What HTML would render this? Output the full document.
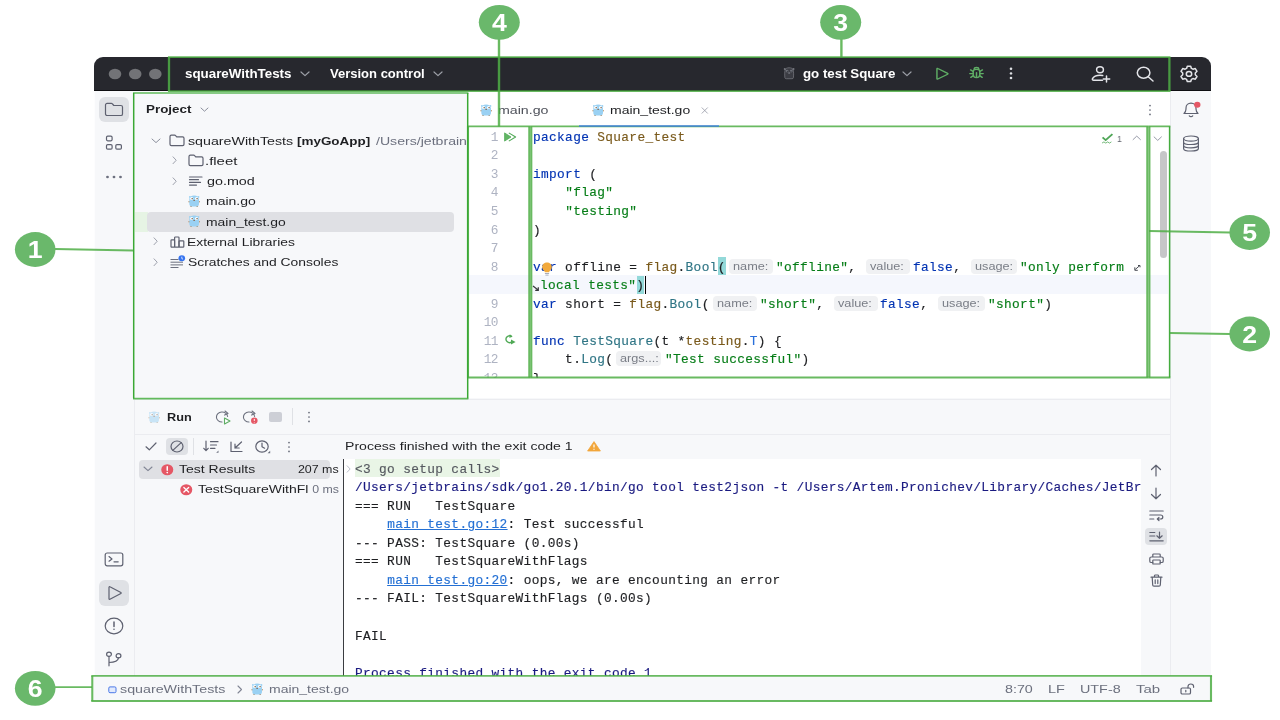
<!DOCTYPE html>
<html lang="en">
<head>
<meta charset="utf-8">
<title>GoLand user interface overview</title>
<style>
*{box-sizing:border-box;margin:0;padding:0}
html,body{width:1280px;height:720px;overflow:hidden;background:#fff}
body{position:relative;font-family:"Liberation Sans",sans-serif;color:#1e1f22}
.a{position:absolute}
/* stretched proportional UI text */
.t{will-change:transform;position:absolute;white-space:nowrap;transform-origin:0 0;transform:scaleX(var(--sx,1.19));font:11.5px/14px "Liberation Sans",sans-serif;color:#1e1f22}
.t.r{transform-origin:100% 0}
.b{font-weight:bold;font-size:11.2px}.b.w{font-size:12.5px}
.g{color:#6c707e}
.w{color:#fff}
/* monospace text */
.m{will-change:transform;position:absolute;white-space:pre;font:12.8px/18.53px "Liberation Mono",monospace;letter-spacing:.35px;color:#1e1f22;left:533px;-webkit-text-stroke:.15px}
.ln{will-change:transform;position:absolute;white-space:pre;font:12.8px/18.53px "Liberation Mono",monospace;letter-spacing:-.5px;color:#aeb3c2;width:30px;left:468px;text-align:right}
.k{color:#0033b3}.s{color:#067d17}.p{color:#7a5a1c}.f{color:#2f7585}.ty{color:#2a6fdb}.nv{color:#1a1a80}.cg{color:#55585f}.lk{color:#2470d4;text-decoration:underline}
.h{position:absolute;height:15px;width:44px;border-radius:4px;background:#f0f1f3}
.h span{will-change:transform;position:absolute;left:4.200px;top:1.100px;white-space:nowrap;font:11px/13px "Liberation Sans",sans-serif;color:#797d86;transform-origin:0 0;transform:scaleX(var(--sx,1.17))}
svg{position:absolute;overflow:visible}
.i{fill:none;stroke:#5e6170;stroke-width:1.2;stroke-linecap:round;stroke-linejoin:round}
.iw{fill:none;stroke:#e4e5e9;stroke-width:1.5;stroke-linecap:round;stroke-linejoin:round}
</style>
</head>
<body>

<!-- ===== window chrome / panels ===== -->
<div id="win" class="a" style="left:94px;top:57px;width:1117px;height:644px;background:#f7f8fa;border-radius:9px 9px 0 0;overflow:hidden">
  <div id="titlebar" class="a" style="left:0;top:0;width:1117px;height:34px;background:#27282e;border-bottom:1px solid #0e0e11"></div>
</div>

<div class="a" style="left:94px;top:91px;width:1px;height:585px;background:#fdfdfe"></div>
<!-- left stripe border -->
<div class="a" style="left:134px;top:398px;width:1px;height:278px;background:#ebecf0"></div>
<!-- editor area (white) -->
<div id="editor" class="a" style="left:468px;top:91px;width:702px;height:307px;background:#fff"></div>
<!-- caret row -->
<div class="a" style="left:468px;top:275px;width:700px;height:19px;background:#f5f7fd"></div>
<!-- run panel separators -->
<div class="a" style="left:134px;top:399px;width:1037px;height:1px;background:#ebecf0"></div>
<div class="a" style="left:134px;top:434px;width:1037px;height:1px;background:#ebecf0"></div>
<div class="a" style="left:1170px;top:91px;width:1px;height:585px;background:#ebecf0"></div>
<!-- console white -->
<div id="console" class="a" style="left:344px;top:459px;width:797px;height:217px;background:#fff"></div>
<div class="a" style="left:343px;top:459px;width:1.3px;height:217px;background:#3a3c40"></div>

<!-- ===== title bar ===== -->
<svg width="60" height="20" viewBox="0 0 60 20" style="left:104px;top:64px">
  <ellipse cx="11" cy="10" rx="6.300" ry="5.300" fill="#727377"/>
  <ellipse cx="31.200" cy="10" rx="6.300" ry="5.300" fill="#727377"/>
  <ellipse cx="51.300" cy="10" rx="6.300" ry="5.300" fill="#727377"/>
</svg>
<div class="t b w" style="left:184.50px;top:66.67px;--sx:1.068">squareWithTests</div>
<svg width="10" height="6" viewBox="0 0 10 6" style="left:300px;top:71px"><path d="M1 1l4 3.6L9 1" fill="none" stroke="#9da0a8" stroke-width="1.2" stroke-linecap="round" stroke-linejoin="round"/></svg>
<div class="t b w" style="left:329.90px;top:66.67px;--sx:1.041">Version control</div>
<svg width="10" height="6" viewBox="0 0 10 6" style="left:433px;top:71px"><path d="M1 1l4 3.6L9 1" fill="none" stroke="#9da0a8" stroke-width="1.2" stroke-linecap="round" stroke-linejoin="round"/></svg>
<!-- run config gopher (muted) -->
<svg width="12.300" height="12.300" viewBox="0 0 13 13" style="left:782.9px;top:67.2px">
  <path d="M2.2 3.2C2.6 1.6 4.3.8 6.5.8s3.9.8 4.3 2.4c.5 2 .5 6 .2 8.2-.2.8-.8 1-1.500 1h-6c-.7 0-1.300-.2-1.500-1-.3-2.200-.3-6.200.2-8.200z" fill="#3b3c43" stroke="#777980" stroke-width=".8"/>
  <circle cx="1.900" cy="2.200" r="1.100" fill="#777980"/><circle cx="11.100" cy="2.200" r="1.100" fill="#777980"/>
  <circle cx="4.300" cy="4.300" r="1.500" fill="#6f727a"/><circle cx="8.700" cy="4.300" r="1.500" fill="#6f727a"/>
  <circle cx="4.600" cy="4.500" r=".6" fill="#27282e"/><circle cx="8.400" cy="4.500" r=".6" fill="#27282e"/>
  <ellipse cx="6.500" cy="6.300" rx="1.200" ry=".8" fill="#7b7e86"/>
</svg>
<div class="t b w" style="left:803.14px;top:66.67px;--sx:1.064">go test Square</div>
<svg width="10" height="6" viewBox="0 0 10 6" style="left:902px;top:71px"><path d="M1 1l4 3.600L9 1" fill="none" stroke="#9da0a8" stroke-width="1.200" stroke-linecap="round" stroke-linejoin="round"/></svg>
<!-- run -->
<svg width="14.500" height="13.500" viewBox="0 0 15 16" preserveAspectRatio="none" style="left:935.300px;top:66.500px"><path d="M2 2.200v11.600c0 .5.500.8.900.5l10.200-5.700c.4-.2.400-.9 0-1.100L2.900 1.700c-.4-.3-.9 0-.9.500z" fill="none" stroke="#5fad65" stroke-width="1.500" stroke-linejoin="round"/></svg>
<!-- debug -->
<svg width="17" height="14" viewBox="0 0 17 16" preserveAspectRatio="none" style="left:968.200px;top:66.300px" fill="none" stroke="#5fad65" stroke-width="1.500" stroke-linecap="round">
  <path d="M5.200 6.200c0-1.400 1.300-2.400 3.300-2.400s3.300 1 3.300 2.400v3.500c0 2-1.400 3.500-3.300 3.500s-3.300-1.500-3.300-3.500z"/>
  <path d="M6.200 3.800C6.200 2.600 7.200 1.700 8.500 1.700s2.300.9 2.300 2.100"/>
  <path d="M5.200 6.200L2.600 4.400M11.800 6.200l2.600-1.800M5.200 8.700H1.800M11.800 8.700h3.400M5.400 11l-2.600 2M11.600 11l2.600 2M8.500 7.500v5.500"/>
</svg>
<!-- kebab -->
<svg width="4" height="16" viewBox="0 0 4 16" style="left:1009px;top:66px" fill="#dfe1e5"><ellipse cx="2" cy="2.800" rx="1.300" ry="1.200"/><ellipse cx="2" cy="7.400" rx="1.300" ry="1.200"/><ellipse cx="2" cy="12" rx="1.300" ry="1.200"/></svg>
<!-- add user -->
<svg width="22" height="18" viewBox="0 0 22 18" style="left:1090px;top:65px" class="iw">
  <ellipse cx="10" cy="4.800" rx="3.400" ry="3"/>
  <path d="M12.500 15.300H3.600c-.9 0-1.500-.8-1.100-1.600 1.100-2.200 3.800-3.400 7.500-3.400 1 0 1.900.1 2.700.3"/>
  <path d="M16.500 11v6M13.300 14h6.400" stroke-width="1.500"/>
</svg>
<!-- search -->
<svg width="20" height="18" viewBox="0 0 20 18" style="left:1135px;top:65px" class="iw">
  <ellipse cx="8.600" cy="7.800" rx="6.300" ry="5.500"/><path d="M13.200 11.800l4.800 4.200" stroke-width="1.500"/>
</svg>
<!-- settings -->
<svg width="20" height="18" viewBox="0 0 20 18" style="left:1179px;top:65px" class="iw">
  <path d="M8.300 1.200h3.400l.7 2.200 1.500.8 2.400-.6 1.700 2.700-1.700 1.700v1.800l1.700 1.700-1.700 2.700-2.400-.6-1.500.8-.7 2.200H8.300l-.7-2.200-1.500-.8-2.400.6L2 11.500l1.700-1.700V8L2 6.300l1.700-2.700 2.400.6 1.500-.8z" stroke-width="1.500"/>
  <ellipse cx="10" cy="8.900" rx="2.700" ry="2.400" stroke-width="1.500"/>
</svg>

<!-- ===== left stripe ===== -->
<div class="a" style="left:99px;top:97px;width:30px;height:25px;border-radius:6px;background:#dfe1e5"></div>
<svg width="20" height="15" viewBox="0 0 20 15" style="left:104px;top:102px" class="i" stroke-width="1.200">
  <path d="M1.500 3c0-.9.700-1.600 1.600-1.600h4.200c.5 0 .9.200 1.200.6l1.300 1.500h7.100c.9 0 1.600.7 1.600 1.600v6.800c0 .9-.7 1.600-1.600 1.600H3.100c-.9 0-1.600-.7-1.600-1.600z"/>
</svg>
<svg width="18" height="16" viewBox="0 0 18 16" style="left:105px;top:135px" class="i" stroke-width="1.200">
  <rect x="1.500" y="1.200" width="5.600" height="4.600" rx="1.200"/><rect x="1.500" y="9.600" width="5.600" height="4.600" rx="1.200"/><rect x="10.800" y="9.600" width="5.600" height="4.600" rx="1.200"/>
</svg>
<svg width="18" height="4" viewBox="0 0 18 4" style="left:105px;top:175px" fill="#6c707e"><ellipse cx="2.500" cy="2" rx="1.400" ry="1.200"/><ellipse cx="9" cy="2" rx="1.400" ry="1.200"/><ellipse cx="15.500" cy="2" rx="1.400" ry="1.200"/></svg>
<!-- terminal -->
<svg width="20" height="15" viewBox="0 0 20 15" style="left:104px;top:551.5px" class="i" stroke-width="1.200">
  <rect x="1.200" y="1" width="17.600" height="12.800" rx="2"/><path d="M5 4.600l3 2.300-3 2.300M10 9.800h4.200"/>
</svg>
<!-- run (selected) -->
<div class="a" style="left:99px;top:580px;width:30px;height:25.500px;border-radius:6px;background:#dfe1e5"></div>
<svg width="16" height="16" viewBox="0 0 16 16" style="left:107px;top:585px" class="i" stroke-width="1.200">
  <path d="M2 2.300v11.400c0 .5.500.8.900.5l11-5.700c.4-.2.400-.8 0-1L2.900 1.800c-.4-.3-.9 0-.9.500z"/>
</svg>
<!-- problems -->
<svg width="20" height="18" viewBox="0 0 20 18" style="left:104px;top:617px" class="i" stroke-width="1.200">
  <ellipse cx="10" cy="9" rx="8.800" ry="7.800"/><path d="M10 5v4.600" stroke-width="1.500"/><ellipse cx="10" cy="12.300" rx=".9" ry=".8" fill="#6c707e" stroke="none"/>
</svg>
<!-- git -->
<svg width="18" height="16" viewBox="0 0 18 16" style="left:105px;top:651px" class="i" stroke-width="1.200">
  <ellipse cx="4" cy="3.200" rx="2.400" ry="2.100"/><ellipse cx="13.500" cy="4.800" rx="2.400" ry="2.100"/><path d="M4 5.300v9.500M4 11.500c5 0 9-.8 9.500-4.600"/>
</svg>

<!-- ===== project tool window ===== -->
<div class="t b" style="left:146.42px;top:102.2px;--sx:1.197">Project</div>
<svg width="9" height="6" viewBox="0 0 9 6" style="left:199.500px;top:107px"><path d="M1 1l3.500 3.200L8 1" fill="none" stroke="#8c909d" stroke-width="1" stroke-linecap="round" stroke-linejoin="round"/></svg>
<!-- row 1 -->
<svg width="10" height="6" viewBox="0 0 10 6" style="left:150.500px;top:138px"><path d="M1 1l4 3.600L9 1" fill="none" stroke="#8c909d" stroke-width="1" stroke-linecap="round" stroke-linejoin="round"/></svg>
<svg width="16" height="13" viewBox="0 0 16 13" style="left:169px;top:134px" class="i" stroke="#858998" stroke-width="1.050"><path d="M1 2.500c0-.8.600-1.400 1.400-1.400h3.200c.4 0 .8.200 1 .5l1.100 1.300h5.900c.8 0 1.400.6 1.400 1.400v6c0 .8-.6 1.400-1.400 1.400H2.400c-.8 0-1.400-.6-1.400-1.400z"/></svg>
<div class="t" style="left:187.80px;top:133.77px;--sx:1.237">squareWithTests</div>
<div class="t b" style="left:296.63px;top:133.86px;--sx:1.202">[myGoApp]</div>
<div class="t g" style="left:375.87px;top:133.77px;--sx:1.227">/Users/jetbrain</div>
<!-- row 2 -->
<svg width="5.500" height="8.500" viewBox="0 0 6 10" style="left:171.500px;top:156.30px"><path d="M1 1l3.700 4L1 9" fill="none" stroke="#8c909d" stroke-width="1" stroke-linecap="round" stroke-linejoin="round"/></svg>
<svg width="16" height="13" viewBox="0 0 16 13" style="left:188px;top:154px" class="i" stroke="#858998" stroke-width="1.050"><path d="M1 2.500c0-.8.600-1.400 1.400-1.400h3.200c.4 0 .8.200 1 .5l1.100 1.300h5.900c.8 0 1.400.6 1.400 1.400v6c0 .8-.6 1.400-1.400 1.400H2.400c-.8 0-1.400-.6-1.400-1.400z"/></svg>
<div class="t" style="left:205.38px;top:153.97px;--sx:1.296">.fleet</div>
<!-- row 3 -->
<svg width="5.500" height="8.500" viewBox="0 0 6 10" style="left:171.500px;top:176.80px"><path d="M1 1l3.700 4L1 9" fill="none" stroke="#8c909d" stroke-width="1" stroke-linecap="round" stroke-linejoin="round"/></svg>
<svg width="14" height="10" viewBox="0 0 14 10" style="left:189px;top:176px" class="i" stroke="#858998" stroke-width=".9"><path d="M.5 1h12.500M.5 3.700h9M.5 6.400h11M.5 9.100h7"/></svg>
<div class="t" style="left:206.63px;top:174.17px;--sx:1.245">go.mod</div>
<!-- row 4 -->
<svg width="12.300" height="12.300" viewBox="0 0 13 13" style="left:187.9px;top:194.7px">
  <ellipse cx="1.300" cy="7.200" rx=".9" ry=".8" fill="#b08457"/><ellipse cx="11.700" cy="7.200" rx=".9" ry=".8" fill="#b08457"/>
  <ellipse cx="3.300" cy="12" rx="1" ry=".7" fill="#b08457"/><ellipse cx="9.700" cy="12" rx="1" ry=".7" fill="#b08457"/>
  <ellipse cx="2" cy="2" rx="1" ry="1" fill="#9ad1f3"/><ellipse cx="11" cy="2" rx="1" ry="1" fill="#9ad1f3"/>
  <path d="M1.400 4.300C1.400 2 3.600.6 6.500.6s5.100 1.400 5.100 3.700v5.200c0 1.700-1.300 2.700-3 2.700H4.400c-1.700 0-3-1-3-2.700z" fill="#9ad1f3"/>
  <ellipse cx="3.900" cy="3.800" rx="1.700" ry="1.600" fill="#fff"/><ellipse cx="9.100" cy="3.800" rx="1.700" ry="1.600" fill="#fff"/>
  <ellipse cx="4.400" cy="3.900" rx=".7" ry=".7" fill="#5a3d22"/><ellipse cx="9.600" cy="3.900" rx=".7" ry=".7" fill="#5a3d22"/>
  <ellipse cx="6.500" cy="5.700" rx=".9" ry=".6" fill="#8a6f5a"/>
</svg>
<div class="t" style="left:205.98px;top:194.37px;--sx:1.217">main.go</div>
<!-- row 5 selected -->
<div class="a" style="left:135px;top:212px;width:13px;height:19.500px;background:#e6f4e4"></div>
<div class="a" style="left:147px;top:212px;width:307px;height:19.500px;border-radius:4px;background:#dfe0e4"></div>
<svg width="12.300" height="12.300" viewBox="0 0 13 13" style="left:187.9px;top:215.2px">
  <ellipse cx="1.300" cy="7.200" rx=".9" ry=".8" fill="#b08457"/><ellipse cx="11.700" cy="7.200" rx=".9" ry=".8" fill="#b08457"/>
  <ellipse cx="3.300" cy="12" rx="1" ry=".7" fill="#b08457"/><ellipse cx="9.700" cy="12" rx="1" ry=".7" fill="#b08457"/>
  <ellipse cx="2" cy="2" rx="1" ry="1" fill="#9ad1f3"/><ellipse cx="11" cy="2" rx="1" ry="1" fill="#9ad1f3"/>
  <path d="M1.400 4.300C1.400 2 3.600.6 6.500.6s5.100 1.400 5.100 3.700v5.200c0 1.700-1.300 2.700-3 2.700H4.400c-1.700 0-3-1-3-2.700z" fill="#9ad1f3"/>
  <ellipse cx="3.900" cy="3.800" rx="1.700" ry="1.600" fill="#fff"/><ellipse cx="9.100" cy="3.800" rx="1.700" ry="1.600" fill="#fff"/>
  <ellipse cx="4.400" cy="3.900" rx=".7" ry=".7" fill="#5a3d22"/><ellipse cx="9.600" cy="3.900" rx=".7" ry=".7" fill="#5a3d22"/>
  <ellipse cx="6.500" cy="5.700" rx=".9" ry=".6" fill="#8a6f5a"/>
</svg>
<div class="t" style="left:205.98px;top:214.57px;--sx:1.210">main_test.go</div>
<!-- row 6 -->
<svg width="5.500" height="8.500" viewBox="0 0 6 10" style="left:152.500px;top:237.30px"><path d="M1 1l3.700 4L1 9" fill="none" stroke="#8c909d" stroke-width="1" stroke-linecap="round" stroke-linejoin="round"/></svg>
<svg width="15" height="12" viewBox="0 0 15 12" style="left:169.500px;top:235.500px" class="i" stroke="#7a7e8d" stroke-width="1"><rect x="1" y="3.800" width="3.600" height="7.400" rx=".8"/><rect x="4.600" y="1" width="4.400" height="10.200" rx=".8"/><rect x="9" y="4.800" width="4.800" height="6.400" rx=".8"/></svg>
<div class="t" style="left:186.65px;top:234.77px;--sx:1.206">External Libraries</div>
<!-- row 7 -->
<svg width="5.500" height="8.500" viewBox="0 0 6 10" style="left:152.500px;top:257.80px"><path d="M1 1l3.700 4L1 9" fill="none" stroke="#8c909d" stroke-width="1" stroke-linecap="round" stroke-linejoin="round"/></svg>
<svg width="16" height="13" viewBox="0 0 16 13" style="left:169.500px;top:255px"><path d="M.5 4.500h8M.5 7.200h12.500M.5 9.900h12.500M.5 12.500h8" fill="none" stroke="#6c707e" stroke-width="1"/><ellipse cx="11.800" cy="3.300" rx="3.300" ry="3" fill="#3574f0"/><path d="M11.800 1.700v1.800l1.200.7" fill="none" stroke="#fff" stroke-width=".8"/></svg>
<div class="t" style="left:187.80px;top:254.97px;--sx:1.206">Scratches and Consoles</div>

<!-- ===== editor tabs ===== -->
<svg width="12.300" height="12.300" viewBox="0 0 13 13" style="left:479.9px;top:104.2px">
  <ellipse cx="1.300" cy="7.200" rx=".9" ry=".8" fill="#b08457"/><ellipse cx="11.700" cy="7.200" rx=".9" ry=".8" fill="#b08457"/>
  <ellipse cx="3.300" cy="12" rx="1" ry=".7" fill="#b08457"/><ellipse cx="9.700" cy="12" rx="1" ry=".7" fill="#b08457"/>
  <ellipse cx="2" cy="2" rx="1" ry="1" fill="#9ad1f3"/><ellipse cx="11" cy="2" rx="1" ry="1" fill="#9ad1f3"/>
  <path d="M1.400 4.300C1.400 2 3.600.6 6.500.6s5.100 1.400 5.100 3.700v5.200c0 1.700-1.300 2.700-3 2.700H4.400c-1.700 0-3-1-3-2.700z" fill="#9ad1f3"/>
  <ellipse cx="3.900" cy="3.800" rx="1.700" ry="1.600" fill="#fff"/><ellipse cx="9.100" cy="3.800" rx="1.700" ry="1.600" fill="#fff"/>
  <ellipse cx="4.400" cy="3.900" rx=".7" ry=".7" fill="#5a3d22"/><ellipse cx="9.600" cy="3.900" rx=".7" ry=".7" fill="#5a3d22"/>
  <ellipse cx="6.500" cy="5.700" rx=".9" ry=".6" fill="#8a6f5a"/>
</svg>
<div class="t" style="left:498.27px;top:103.42px;color:#4e515a;--sx:1.234">main.go</div>
<svg width="12.300" height="12.300" viewBox="0 0 13 13" style="left:591.9px;top:104.2px">
  <ellipse cx="1.300" cy="7.200" rx=".9" ry=".8" fill="#b08457"/><ellipse cx="11.700" cy="7.200" rx=".9" ry=".8" fill="#b08457"/>
  <ellipse cx="3.300" cy="12" rx="1" ry=".7" fill="#b08457"/><ellipse cx="9.700" cy="12" rx="1" ry=".7" fill="#b08457"/>
  <ellipse cx="2" cy="2" rx="1" ry="1" fill="#9ad1f3"/><ellipse cx="11" cy="2" rx="1" ry="1" fill="#9ad1f3"/>
  <path d="M1.400 4.300C1.400 2 3.600.6 6.500.6s5.100 1.400 5.100 3.700v5.200c0 1.700-1.300 2.700-3 2.700H4.400c-1.700 0-3-1-3-2.700z" fill="#9ad1f3"/>
  <ellipse cx="3.900" cy="3.800" rx="1.700" ry="1.600" fill="#fff"/><ellipse cx="9.100" cy="3.800" rx="1.700" ry="1.600" fill="#fff"/>
  <ellipse cx="4.400" cy="3.900" rx=".7" ry=".7" fill="#5a3d22"/><ellipse cx="9.600" cy="3.900" rx=".7" ry=".7" fill="#5a3d22"/>
  <ellipse cx="6.500" cy="5.700" rx=".9" ry=".6" fill="#8a6f5a"/>
</svg>
<div class="t" style="left:609.58px;top:103.42px;--sx:1.218">main_test.go</div>
<svg width="7.500" height="7" viewBox="0 0 9 9" style="left:700.800px;top:107px"><path d="M1 1l7 7M8 1L1 8" fill="none" stroke="#9296a3" stroke-width="1" stroke-linecap="round"/></svg>

<svg width="4" height="14" viewBox="0 0 4 14" style="left:1148px;top:102.500px" fill="#6c707e"><ellipse cx="2" cy="2.600" rx=".9" ry=".85"/><ellipse cx="2" cy="7" rx=".9" ry=".85"/><ellipse cx="2" cy="11.400" rx=".9" ry=".85"/></svg>

<!-- ===== editor code ===== -->
<div id="code" class="a" style="left:0;top:0;width:1280px;height:377.500px;overflow:hidden">
<div class="ln" style="top:128.9px">1</div>
<div class="ln" style="top:147.43px">2</div>
<div class="ln" style="top:165.96px">3</div>
<div class="ln" style="top:184.49px">4</div>
<div class="ln" style="top:203.02px">5</div>
<div class="ln" style="top:221.55px">6</div>
<div class="ln" style="top:240.08px">7</div>
<div class="ln" style="top:258.61px">8</div>
<div class="ln" style="top:295.67px">9</div>
<div class="ln" style="top:314.2px">10</div>
<div class="ln" style="top:332.73px">11</div>
<div class="ln" style="top:351.26px">12</div>
<div class="ln" style="top:369.79px">13</div>
<div class="m" style="top:128.9px;left:533px"><span class="k">package</span> <span class="p">Square_test</span></div>
<div class="m" style="top:165.96px;left:533px"><span class="k">import</span> (</div>
<div class="m" style="top:184.49px;left:533px">    <span class="s">"flag"</span></div>
<div class="m" style="top:203.02px;left:533px">    <span class="s">"testing"</span></div>
<div class="m" style="top:221.55px;left:533px">)</div>
<div class="a" style="left:718.4px;top:257.11px;width:7.600px;height:18px;background:#93d9d9"></div>
<div class="m" style="top:258.61px;left:533px"><span class="k">var</span> offline = <span class="p">flag</span>.<span class="f">Bool</span>(</div>
<div class="h" style="left:728.5px;top:258.51px;width:44px"><span style="--sx:1.155">name:</span></div>
<div class="m" style="top:258.61px;left:775.5px"><span class="s">"offline"</span>,</div>
<div class="h" style="left:865.5px;top:258.51px;width:44px"><span style="--sx:1.155">value:</span></div>
<div class="m" style="top:258.61px;left:912.5px"><span class="k">false</span>,</div>
<div class="h" style="left:970.5px;top:258.51px;width:46.5px"><span style="--sx:1.155">usage:</span></div>
<div class="m" style="top:258.61px;left:1020px"><span class="s">"only perform </span></div>
<div class="a" style="left:636.7px;top:275.64px;width:7.600px;height:18px;background:#93d9d9"></div>
<div class="m" style="top:277.14px;left:539.8px"><span class="s">local tests"</span>)</div>
<div class="a" style="left:644.500px;top:276.14px;width:1.700px;height:17.500px;background:#000"></div>
<div class="m" style="top:295.67px;left:533px"><span class="k">var</span> short = <span class="p">flag</span>.<span class="f">Bool</span>(</div>
<div class="h" style="left:712.5px;top:295.57px;width:44px"><span style="--sx:1.155">name:</span></div>
<div class="m" style="top:295.67px;left:759.5px"><span class="s">"short"</span>,</div>
<div class="h" style="left:833.5px;top:295.57px;width:44px"><span style="--sx:1.155">value:</span></div>
<div class="m" style="top:295.67px;left:880px"><span class="k">false</span>,</div>
<div class="h" style="left:938px;top:295.57px;width:46.5px"><span style="--sx:1.155">usage:</span></div>
<div class="m" style="top:295.67px;left:988px"><span class="s">"short"</span>)</div>
<div class="m" style="top:332.73px;left:533px"><span class="k">func</span> <span class="f">TestSquare</span>(t *<span class="p">testing</span>.<span class="ty">T</span>) {</div>
<div class="m" style="top:351.26px;left:533px">    t.<span class="f">Log</span>(</div>
<div class="h" style="left:615.5px;top:351.16px;width:45.5px"><span style="--sx:1.155">args...:</span></div>
<div class="m" style="top:351.26px;left:664.5px"><span class="s">"Test successful"</span>)</div>
<div class="m" style="top:369.79px;left:533px">}</div>
<svg width="13" height="10" viewBox="0 0 13 10" style="left:504px;top:131.500px"><path d="M.6.900v8.200L7 5z" fill="#62b565" stroke="#4fa955" stroke-width=".8" stroke-linejoin="round"/><path d="M4.800.900L11.600 5 4.800 9.100" fill="none" stroke="#4fa955" stroke-width="1.100" stroke-linejoin="round"/></svg>
<svg width="12" height="11" viewBox="0 0 12 11" style="left:504px;top:334px"><path d="M7.800 2.600A3.600 3.300 0 1 0 8 7.600" fill="none" stroke="#4fa955" stroke-width="1.400"/><path d="M5.800.3l2.800 2.300-3.200 1.300z" fill="#4fa955"/><path d="M7 5.400v5.200l4.600-2.600z" fill="#4fa955"/></svg>
<svg width="12" height="15" viewBox="0 0 12 15" style="left:540.600px;top:262px"><path d="M6 .5c2.700 0 4.800 2 4.800 4.500 0 1.700-.9 2.900-1.900 3.800-.5.500-.7 1-.7 1.500H3.800c0-.5-.2-1-.7-1.500C2.100 7.900 1.200 6.700 1.200 5 1.200 2.500 3.300.5 6 .5z" fill="#f2a93b"/><path d="M3.900 11.500h4.200M4.400 13.100h3.200" stroke="#a8adbd" stroke-width="1" fill="none"/></svg>
<svg width="8" height="8" viewBox="0 0 8 8" style="left:1132.500px;top:263.500px"><path d="M6.500 1.800L2.200 5.500M1.800 3.300v3h3M5 1.500h2v1.800" fill="none" stroke="#4a4d55" stroke-width="1"/></svg>
<svg width="8" height="8" viewBox="0 0 8 8" style="left:532.300px;top:283.500px"><path d="M1 2l4.800 3.800M6.300 3.300v3H3.200" fill="none" stroke="#36383d" stroke-width="1.200"/></svg>
</div>
<svg width="13.500" height="11.500" viewBox="0 0 13 12" preserveAspectRatio="none" style="left:1100.800px;top:132.800px"><path d="M1.500 4.600l3 2.800L11 1.200" fill="none" stroke="#4fa657" stroke-width="1.800"/><path d="M1 10.500l1.800-1.200 1.800 1.200 1.800-1.200 1.800 1.200 1.800-1.200" fill="none" stroke="#4fa657" stroke-width=".8"/></svg>
<div class="t g" style="left:1116.600px;top:131.800px;font-size:9.500px;--sx:.9;color:#5c5f69">1</div>
<svg width="9.500" height="5.500" viewBox="0 0 10 6" style="left:1132.300px;top:135.300px"><path d="M1 5l4-3.800L9 5" fill="none" stroke="#8d90a0" stroke-width="1" stroke-linecap="round" stroke-linejoin="round"/></svg>
<svg width="9.500" height="5.500" viewBox="0 0 10 6" style="left:1153.200px;top:135.500px"><path d="M1 1l4 3.800L9 1" fill="none" stroke="#8d90a0" stroke-width="1" stroke-linecap="round" stroke-linejoin="round"/></svg>
<div class="a" style="left:1160px;top:150.500px;width:6.500px;height:107px;border-radius:3.500px;background:#c6c6c8"></div>

<!-- ===== run tool window ===== -->
<svg width="12.300" height="12.300" viewBox="0 0 13 13" style="left:148.4px;top:410.7px;opacity:.5">
  <ellipse cx="1.300" cy="7.200" rx=".9" ry=".8" fill="#b08457"/><ellipse cx="11.700" cy="7.200" rx=".9" ry=".8" fill="#b08457"/>
  <ellipse cx="3.300" cy="12" rx="1" ry=".7" fill="#b08457"/><ellipse cx="9.700" cy="12" rx="1" ry=".7" fill="#b08457"/>
  <ellipse cx="2" cy="2" rx="1" ry="1" fill="#9ad1f3"/><ellipse cx="11" cy="2" rx="1" ry="1" fill="#9ad1f3"/>
  <path d="M1.400 4.300C1.400 2 3.600.6 6.500.6s5.100 1.400 5.100 3.700v5.200c0 1.700-1.300 2.700-3 2.700H4.400c-1.700 0-3-1-3-2.700z" fill="#9ad1f3"/>
  <ellipse cx="3.900" cy="3.800" rx="1.700" ry="1.600" fill="#fff"/><ellipse cx="9.100" cy="3.800" rx="1.700" ry="1.600" fill="#fff"/>
  <ellipse cx="4.400" cy="3.900" rx=".7" ry=".7" fill="#5a3d22"/><ellipse cx="9.600" cy="3.900" rx=".7" ry=".7" fill="#5a3d22"/>
  <ellipse cx="6.500" cy="5.700" rx=".9" ry=".6" fill="#8a6f5a"/>
</svg>
<div class="t b" style="left:166.76px;top:409.86px;--sx:1.137">Run</div>
<!-- rerun -->
<svg width="17" height="15" viewBox="0 0 17 15" style="left:214.500px;top:409.500px">
  <path d="M12.600 6.500A5.600 5 0 1 0 7 12" fill="none" stroke="#6c707e" stroke-width="1.100" stroke-linecap="round"/><path d="M10 1l3 2.400-3.400 1.700" fill="none" stroke="#6c707e" stroke-width="1.100" stroke-linecap="round" stroke-linejoin="round"/>
  <path d="M9.500 8v6l5.500-3z" fill="#fff" stroke="#5fad65" stroke-width="1.100" stroke-linejoin="round"/>
</svg>
<!-- rerun failed -->
<svg width="17" height="15" viewBox="0 0 17 15" style="left:242px;top:409.500px">
  <path d="M12.600 6.500A5.600 5 0 1 0 7 12" fill="none" stroke="#6c707e" stroke-width="1.100" stroke-linecap="round"/><path d="M10 1l3 2.400-3.400 1.700" fill="none" stroke="#6c707e" stroke-width="1.100" stroke-linecap="round" stroke-linejoin="round"/>
  <ellipse cx="12.300" cy="10.700" rx="3.300" ry="3.100" fill="#e55765"/><path d="M12.300 8.900v2M12.300 12.100v.5" stroke="#fff" stroke-width="1" fill="none"/>
</svg>
<div class="a" style="left:269px;top:412px;width:12.500px;height:10px;border-radius:2px;background:#cdcfd6"></div>
<div class="a" style="left:292px;top:408px;width:1px;height:17px;background:#dfe1e5"></div>
<svg width="4" height="14" viewBox="0 0 4 14" style="left:306.500px;top:410px" fill="#6c707e"><ellipse cx="2" cy="2.600" rx=".9" ry=".85"/><ellipse cx="2" cy="7" rx=".9" ry=".85"/><ellipse cx="2" cy="11.400" rx=".9" ry=".85"/></svg>
<!-- test toolbar -->
<svg width="12" height="9" viewBox="0 0 12 9" style="left:144.500px;top:442px" class="i"><path d="M1 4.800l3.300 3L11 1"/></svg>
<div class="a" style="left:166px;top:437.500px;width:21.500px;height:17.500px;border-radius:4px;background:#dfe1e5"></div>
<svg width="14" height="13" viewBox="0 0 14 13" style="left:169.500px;top:440px" class="i"><ellipse cx="7" cy="6.500" rx="6" ry="5.500"/><path d="M2.800 10.400l8.400-7.800"/></svg>
<div class="a" style="left:193px;top:438px;width:1px;height:17px;background:#dfe1e5"></div>
<svg width="16" height="13" viewBox="0 0 16 13" style="left:203px;top:440px" class="i" stroke="#4b4e57" stroke-width="1.400"><path d="M3 1v9.500M.8 8.300L3 10.600l2.200-2.300M7.500 1.700h7.500M7.500 5h6M7.500 8.300h4.500"/><path d="M15.500 10.500v2.200h-2.300z" fill="#6c707e" stroke="none"/></svg>
<svg width="13" height="12" viewBox="0 0 13 12" style="left:230px;top:440.500px" class="i" stroke="#8b8e99" stroke-width="1"><path d="M1 1v9.500h11M11.500 1L5 7M5 3v4h4.200"/></svg>
<svg width="16" height="14" viewBox="0 0 16 14" style="left:255px;top:439.500px" class="i"><ellipse cx="7" cy="6.500" rx="6.200" ry="5.700"/><path d="M7 3v3.700l2.600 1.500"/><path d="M15.200 10.800v2.500h-2.600z" fill="#6c707e" stroke="none"/></svg>
<svg width="4" height="14" viewBox="0 0 4 14" style="left:286.500px;top:439.500px" fill="#6c707e"><ellipse cx="2" cy="2.600" rx=".9" ry=".85"/><ellipse cx="2" cy="7" rx=".9" ry=".85"/><ellipse cx="2" cy="11.400" rx=".9" ry=".85"/></svg>
<div class="t" style="left:345.03px;top:439.02px;--sx:1.224">Process finished with the exit code 1</div>
<svg width="14" height="11" viewBox="0 0 14 11" style="left:587px;top:440.500px"><path d="M7 .6L13.400 10H.6z" fill="#f2a63a" stroke="#f2a63a" stroke-width=".8" stroke-linejoin="round"/><path d="M7 3.600v3M7 7.800v.9" stroke="#fff" stroke-width="1.200" fill="none"/></svg>
<!-- test tree -->
<div class="a" style="left:138.500px;top:459.500px;width:191.500px;height:19px;border-radius:4px;background:#dfe0e4"></div>
<svg width="10" height="6" viewBox="0 0 10 6" style="left:142.500px;top:466px"><path d="M1 1l4 3.600L9 1" fill="none" stroke="#818594" stroke-width="1.100" stroke-linecap="round" stroke-linejoin="round"/></svg>
<svg width="12.500" height="11.500" viewBox="0 0 14 13" style="left:160.800px;top:463.500px"><ellipse cx="7" cy="6.500" rx="6.800" ry="6.300" fill="#e55765"/><path d="M7 3v4.200" stroke="#fff" stroke-width="1.700" stroke-linecap="round"/><ellipse cx="7" cy="9.700" rx="1" ry=".9" fill="#fff"/></svg>
<div class="t" style="left:178.99px;top:462.02px;--sx:1.217">Test Results</div>
<div class="t r" style="right:941.71px;top:462.02px;--sx:1.082">207 ms</div>
<svg width="12.500" height="11.500" viewBox="0 0 14 13" style="left:180.300px;top:483.800px"><ellipse cx="7" cy="6.500" rx="6.800" ry="6.300" fill="#e55765"/><path d="M4.300 4l5.400 5M9.700 4L4.300 9" stroke="#fff" stroke-width="1.500" stroke-linecap="round"/></svg>
<div class="t" style="left:198.40px;top:482.02px;--sx:1.216">TestSquareWithFl</div>
<div class="t r g" style="right:941.51px;top:482.02px;--sx:1.072">0 ms</div>

<!-- ===== console ===== -->
<div class="a" style="left:0;top:0;width:1141px;height:676px;overflow:hidden">
<svg width="5.500" height="8" viewBox="0 0 6 10" style="left:346px;top:464.800px"><path d="M1 1l3.700 4L1 9" fill="none" stroke="#a8adbd" stroke-width="1" stroke-linecap="round" stroke-linejoin="round"/></svg>
<div class="a" style="left:355px;top:459px;width:145px;height:18px;background:#e9f5e6"></div>
<div class="m cg" style="left:355px;top:460.53px">&lt;3 go setup calls&gt;</div>
<div class="m nv" style="left:355px;top:479.09px">/Users/jetbrains/sdk/go1.20.1/bin/go tool test2json -t /Users/Artem.Pronichev/Library/Caches/JetBrains/GoLand2023.1/tmp/GoLand/___TestSquare_in_myGoApp.test</div>
<div class="m " style="left:355px;top:497.64px">=== RUN   TestSquare</div>
<div class="m " style="left:355px;top:516.20px">    <span class="lk">main_test.go:12</span>: Test successful</div>
<div class="m " style="left:355px;top:534.75px">--- PASS: TestSquare (0.00s)</div>
<div class="m " style="left:355px;top:553.31px">=== RUN   TestSquareWithFlags</div>
<div class="m " style="left:355px;top:571.87px">    <span class="lk">main_test.go:20</span>: oops, we are encounting an error</div>
<div class="m " style="left:355px;top:590.42px">--- FAIL: TestSquareWithFlags (0.00s)</div>
<div class="m " style="left:355px;top:627.53px">FAIL</div>
<div class="m nv" style="left:355px;top:664.65px">Process finished with the exit code 1</div>
</div>
<svg width="12" height="13" viewBox="0 0 12 13" style="left:1150px;top:464px" class="i" stroke="#747886" stroke-width="1"><path d="M6 12V1.200M1.500 5.500L6 1.200l4.500 4.300"/></svg>
<svg width="12" height="13" viewBox="0 0 12 13" style="left:1150px;top:486.500px" class="i" stroke="#747886" stroke-width="1"><path d="M6 1v10.800M1.500 7.500L6 11.800l4.500-4.300"/></svg>
<svg width="15" height="11" viewBox="0 0 15 11" style="left:1148.500px;top:510px" class="i" stroke="#747886" stroke-width="1"><path d="M.8 1h13.400M.8 5h10.700c1.500 0 2.300.9 2.300 2s-.8 2-2.300 2H8.500M.8 9h4M10 7.300L8.300 9l1.700 1.700"/></svg>
<div class="a" style="left:1145px;top:527.500px;width:21.500px;height:17.500px;border-radius:4px;background:#dfe1e5"></div>
<svg width="15" height="11" viewBox="0 0 15 11" style="left:1148.500px;top:530.500px" class="i" stroke="#747886" stroke-width="1"><path d="M.8 1.500h5M.8 5h5M.8 9.800h13.400M10.500 1v6.300M7.800 4.800l2.700 2.500 2.700-2.500"/></svg>
<svg width="15" height="12" viewBox="0 0 15 12" style="left:1148.500px;top:552.500px" class="i" stroke="#747886" stroke-width="1"><path d="M3.800 4V1.800c0-.5.400-.8.900-.8h5.600c.5 0 .9.300.9.800V4M3.800 9.500H2.300c-.8 0-1.500-.6-1.500-1.300V5.300c0-.7.700-1.300 1.500-1.300h10.400c.8 0 1.500.6 1.500 1.300v2.900c0 .7-.7 1.300-1.500 1.300h-1.500"/><rect x="3.800" y="7" width="7.400" height="4" rx=".6"/></svg>
<svg width="13" height="13" viewBox="0 0 13 13" style="left:1149.5px;top:573.5px" class="i" stroke="#747886" stroke-width="1"><path d="M1 3.200h11M4.500 3V1.800c0-.5.400-.8.800-.8h2.400c.4 0 .8.300.8.800V3M2.200 3.200l.5 7.800c0 .7.600 1.200 1.300 1.200h5c.7 0 1.300-.5 1.300-1.200l.5-7.800M5.200 5.800v3.800M7.800 5.800v3.800"/></svg>

<!-- ===== right stripe ===== -->
<svg width="18" height="17" viewBox="0 0 18 17" style="left:1182px;top:100.500px" class="i" stroke-width="1.400">
  <path d="M2 12.500h14c-1.300-1.200-2-2.500-2-4.500V7c0-2.800-2.200-4.800-5-4.800S4 4.200 4 7v1c0 2-.7 3.300-2 4.500z"/><path d="M7.300 14.800c.4.600 1 .9 1.700.9s1.300-.3 1.700-.9"/>
  <ellipse cx="15.300" cy="3.700" rx="3.200" ry="3" fill="#e55765" stroke="none"/>
</svg>
<svg width="18" height="17" viewBox="0 0 18 17" style="left:1182px;top:134.500px" class="i" stroke-width="1.400">
  <ellipse cx="9" cy="3.600" rx="7.400" ry="2.600"/><path d="M1.600 3.600v9.800c0 1.400 3.300 2.600 7.400 2.600s7.400-1.200 7.400-2.600V3.600M1.600 6.900c0 1.400 3.300 2.600 7.400 2.600s7.400-1.200 7.400-2.600M1.600 10.200c0 1.400 3.300 2.600 7.400 2.600s7.400-1.200 7.400-2.600"/>
</svg>

<!-- ===== status bar ===== -->
<div class="a" style="left:94px;top:676px;width:1116px;height:25px;background:#f7f8fa"></div>
<svg width="9" height="8" viewBox="0 0 9 8" style="left:107.500px;top:685.500px"><rect x=".8" y=".9" width="7.200" height="5.800" rx="1.200" fill="#e2eafc" stroke="#4a78e8" stroke-width="1"/></svg>
<div class="t g" style="left:119.64px;top:682.22px;--sx:1.240">squareWithTests</div>
<svg width="6" height="9" viewBox="0 0 6 9" style="left:236.500px;top:684.500px"><path d="M1 1l3.500 3.500L1 8" fill="none" stroke="#818594" stroke-width="1.100" stroke-linecap="round" stroke-linejoin="round"/></svg>
<svg width="12.300" height="12.300" viewBox="0 0 13 13" style="left:251.4px;top:682.7px">
  <ellipse cx="1.300" cy="7.200" rx=".9" ry=".8" fill="#b08457"/><ellipse cx="11.700" cy="7.200" rx=".9" ry=".8" fill="#b08457"/>
  <ellipse cx="3.300" cy="12" rx="1" ry=".7" fill="#b08457"/><ellipse cx="9.700" cy="12" rx="1" ry=".7" fill="#b08457"/>
  <ellipse cx="2" cy="2" rx="1" ry="1" fill="#9ad1f3"/><ellipse cx="11" cy="2" rx="1" ry="1" fill="#9ad1f3"/>
  <path d="M1.400 4.300C1.400 2 3.600.6 6.500.6s5.100 1.400 5.100 3.700v5.200c0 1.700-1.300 2.700-3 2.700H4.400c-1.700 0-3-1-3-2.700z" fill="#9ad1f3"/>
  <ellipse cx="3.900" cy="3.800" rx="1.700" ry="1.600" fill="#fff"/><ellipse cx="9.100" cy="3.800" rx="1.700" ry="1.600" fill="#fff"/>
  <ellipse cx="4.400" cy="3.900" rx=".7" ry=".7" fill="#5a3d22"/><ellipse cx="9.600" cy="3.900" rx=".7" ry=".7" fill="#5a3d22"/>
  <ellipse cx="6.500" cy="5.700" rx=".9" ry=".6" fill="#8a6f5a"/>
</svg>
<div class="t g" style="left:269.47px;top:682.22px;--sx:1.217">main_test.go</div>
<div class="t g" style="left:1005.04px;top:682.22px;--sx:1.241">8:70</div>
<div class="t g" style="left:1047.56px;top:682.22px;--sx:1.260">LF</div>
<div class="t g" style="left:1080.33px;top:682.22px;--sx:1.247">UTF-8</div>
<div class="t g" style="left:1136.42px;top:682.22px;--sx:1.305">Tab</div>
<svg width="15" height="12" viewBox="0 0 15 12" style="left:1179.500px;top:683px" class="i"><rect x="1" y="5" width="9.500" height="6" rx="1.300"/><path d="M8 5V3.500c0-1.400 1.200-2.500 2.800-2.500s2.800 1.100 2.800 2.500v.8M5.800 7.300v1.500"/></svg>


<!-- ===== green annotation overlay ===== -->
<svg id="anno" width="1280" height="720" viewBox="0 0 1280 720" style="left:0;top:0">
  <g fill="none" stroke="#4fae45" stroke-opacity="0.85">
    <path d="M167.95 57.2H1170.45M167.95 91.1H1170.45" stroke-width="1.8"/>
    <path d="M169 57.2V91.100M1169.400 57.2V91.100" stroke-width="2.300"/>
    <path d="M466.95 126.4H530.35M466.95 377.5H530.35" stroke-width="1.8"/>
    <path d="M468 126.4V377.5M529.3 126.4V377.5" stroke-width="2.1"/>
    <path d="M530.25 126.4H1148.35M530.25 377.5H1148.35" stroke-width="1.8"/>
    <path d="M531.3 126.4V377.5M1147.3 126.4V377.5" stroke-width="2.1"/>
    <path d="M1148.35 126.4H1170.35M1148.35 377.5H1170.35" stroke-width="1.8"/>
    <path d="M1149.400 126.400V377.500" stroke-width="2.100"/>
    <path d="M1169.600 126.400V377.500" stroke="#3aa834" stroke-opacity=".95" stroke-width="1.500"/>
    <path d="M91.25 675.9H1212.05M91.25 701H1212.05" stroke-width="1.8"/>
    <path d="M92.3 675.9V701M1211 675.9V701" stroke-width="2.1"/>
    <path d="M133 93H468.400M133 398.600H468.400" stroke="#62ba5c" stroke-opacity="1" stroke-width="1.600"/>
    <path d="M133.700 93V398.600M467.700 93V398.600" stroke="#3aa834" stroke-opacity="1" stroke-width="1.500"/>
    <path d="M499 39V126.400" stroke-width="2.400"/>
    <path d="M841.400 39V57" stroke-width="2.400"/>
    <path d="M55 249L133 250.500" stroke-width="1.800"/>
    <path d="M55 687.200H92" stroke-width="1.800"/>
    <path d="M1149 231L1230 232.500" stroke-width="1.800"/>
    <path d="M1170 333L1230 334" stroke-width="1.800"/>
  </g>
  <g fill="#6ab86b">
    <ellipse cx="35.200" cy="249.500" rx="20.300" ry="17.400"/>
    <ellipse cx="1249.700" cy="334" rx="20.300" ry="17.400"/>
    <ellipse cx="840.700" cy="22.300" rx="20.500" ry="17.400"/>
    <ellipse cx="499.300" cy="22.300" rx="20.500" ry="17.400"/>
    <ellipse cx="1249.700" cy="232.500" rx="20.300" ry="17.400"/>
    <ellipse cx="35.200" cy="688.300" rx="20.300" ry="17.400"/>
  </g>
  <g fill="#fff" style="font-family:'Liberation Sans',sans-serif;font-weight:bold;font-size:23px" text-anchor="middle">
    <text transform="translate(35.2 258.3) scale(1.16 1)">1</text>
    <text transform="translate(1249.7 342.8) scale(1.16 1)">2</text>
    <text transform="translate(840.7 31.1) scale(1.16 1)">3</text>
    <text transform="translate(499.3 31.1) scale(1.16 1)">4</text>
    <text transform="translate(1249.7 241.3) scale(1.16 1)">5</text>
    <text transform="translate(35.2 697.1) scale(1.16 1)">6</text>
  </g>
</svg>
<div class="a" style="left:579px;top:124.600px;width:140px;height:2.400px;background:rgba(53,116,240,.62)"></div>
</body>
</html>
